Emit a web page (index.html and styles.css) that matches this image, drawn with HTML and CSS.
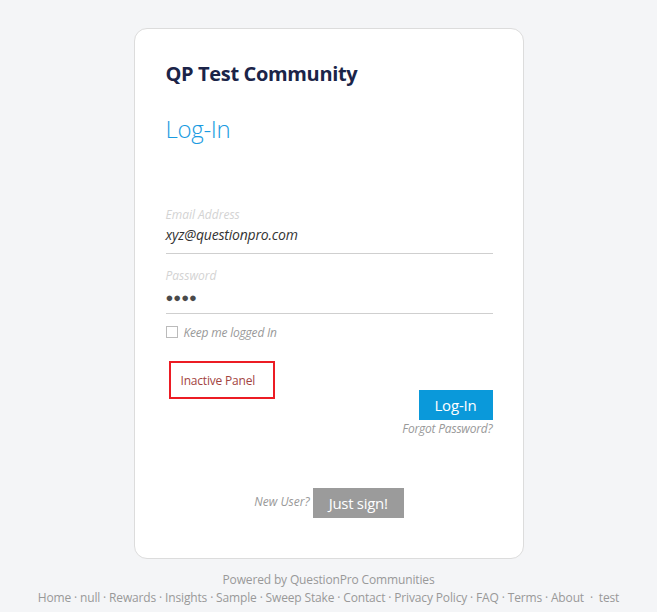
FILE: index.html
```html
<!DOCTYPE html>
<html>
<head>
<meta charset="utf-8">
<link rel="stylesheet" href="styles.css">
</head>
<body>
<div class="page">
  <div class="card">
    <h1 class="community">QP Test Community</h1>
    <h2 class="login-title">Log-In</h2>
    <div class="field field-email">
      <label class="field-label">Email Address</label>
      <div class="field-value">xyz@questionpro.com</div>
    </div>
    <div class="field field-pass">
      <label class="field-label">Password</label>
      <div class="field-value dots">&#9679;&#9679;&#9679;&#9679;</div>
    </div>
    <div class="remember">
      <span class="checkbox"></span>
      <span class="remember-text">Keep me logged In</span>
    </div>
    <div class="alert-row">
      <div class="inactive">Inactive Panel</div>
    </div>
    <div class="actions">
      <button class="btn-login">Log-In</button>
      <a class="forgot">Forgot Password?</a>
    </div>
    <div class="signup">
      <span class="new-user">New User?</span>
      <button class="btn-sign">Just sign!</button>
    </div>
  </div>
  <div class="footer">
    <div class="powered">Powered by QuestionPro Communities</div>
    <div class="links">Home · null · Rewards · Insights · Sample · Sweep Stake · Contact · Privacy Policy · FAQ · Terms · About &nbsp;· &nbsp;test</div>
  </div>
</div>
</body>
</html>
```

FILE: styles.css
```css
html, body {
  margin: 0;
  padding: 0;
}
body {
  background: #f4f5f7;
  font-family: "Open Sans", "Noto Sans", sans-serif;
  color: #333;
}
.page {
  padding-top: 28px;
}
.card {
  box-sizing: border-box;
  width: 390px;
  height: 531px;
  margin: 0 auto;
  background: #fff;
  border: 1px solid #dcdcdc;
  border-radius: 13px;
  padding: 31px 30px 0 31px;
  display: flex;
  flex-direction: column;
}
.community {
  margin: 0;
  font-size: 20px;
  line-height: 28px;
  font-weight: 700;
  color: #1b2448;
  letter-spacing: -0.35px;
}
.login-title {
  margin: 25px 0 0;
  font-size: 24px;
  line-height: 32px;
  font-weight: 300;
  color: #1a9be1;
  letter-spacing: -0.3px;
}
.field {
  box-sizing: border-box;
  border-bottom: 1px solid #cfcfcf;
  display: flex;
  flex-direction: column;
}
.field-email {
  margin-top: 62px;
  height: 47px;
}
.field-pass {
  margin-top: 14px;
  height: 46px;
}
.field-label {
  font-size: 12px;
  line-height: 16px;
  font-style: italic;
  color: #d3d3d3;
}
.field-value {
  margin-top: 2px;
  font-size: 14px;
  line-height: 20px;
  font-style: italic;
  color: #333;
  letter-spacing: -0.2px;
}
.dots {
  font-style: normal;
  font-size: 13px;
  line-height: 22px;
  letter-spacing: 0;
  color: #4a4a4a;
}
.remember {
  margin-top: 11px;
  display: flex;
  align-items: center;
  gap: 6px;
  height: 14px;
}
.checkbox {
  box-sizing: border-box;
  width: 12px;
  height: 12px;
  border: 1px solid #bbb;
  background: #fff;
}
.remember-text {
  font-size: 12px;
  font-style: italic;
  color: #999;
  letter-spacing: -0.2px;
}
.alert-row {
  margin-top: 22px;
  padding-left: 3px;
  display: flex;
}
.inactive {
  box-sizing: border-box;
  width: 106px;
  height: 38px;
  border: 2px solid #ec1c24;
  padding-left: 10px;
  display: flex;
  align-items: center;
  font-size: 12px;
  color: #a3443f;
  letter-spacing: -0.2px;
}
.actions {
  margin-top: -9px;
  display: flex;
  flex-direction: column;
  align-items: flex-end;
}
.btn-login {
  width: 74px;
  height: 30px;
  border: none;
  background: #0a99da;
  color: #fff;
  font-family: inherit;
  font-size: 15px;
  padding: 0;
  letter-spacing: -0.2px;
}
.forgot {
  margin-top: 0;
  font-size: 12px;
  font-style: italic;
  color: #999;
  letter-spacing: -0.2px;
}
.signup {
  margin-top: 51px;
  display: flex;
  justify-content: center;
  align-items: center;
  gap: 3px;
}
.new-user {
  font-size: 12px;
  font-style: italic;
  color: #999;
  letter-spacing: 0;
  line-height: 20px;
  padding-bottom: 3px;
}
.btn-sign {
  width: 91px;
  height: 30px;
  border: none;
  background: #9b9b9b;
  color: #fff;
  font-family: inherit;
  font-size: 15px;
  padding: 0;
  letter-spacing: -0.3px;
}
.footer {
  text-align: center;
  color: #999;
  font-size: 12px;
  letter-spacing: -0.15px;
  padding-top: 12px;
}
.powered {
  line-height: 18px;
}
.links {
  line-height: 18px;
}
```
